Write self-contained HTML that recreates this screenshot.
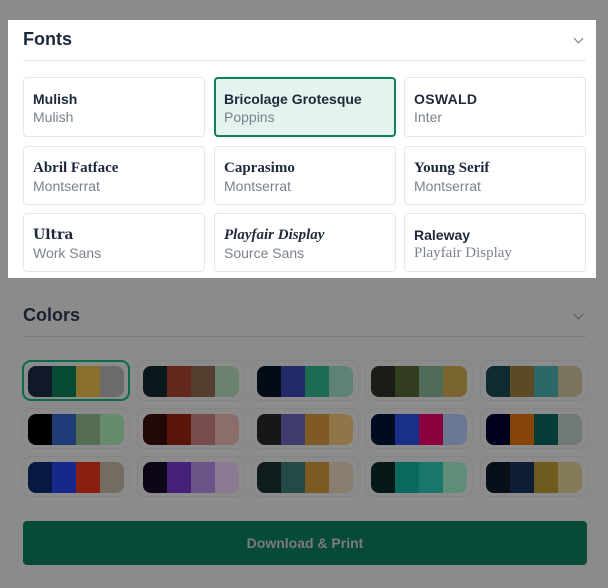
<!DOCTYPE html>
<html><head><meta charset="utf-8"><style>
*{margin:0;padding:0;box-sizing:border-box}
body{width:608px;height:588px;background:#8b8b8b;position:relative;overflow:hidden;font-family:"Liberation Sans",sans-serif}
.a{position:absolute}
.panel{left:8px;top:20px;width:588px;height:258px;background:#fff}
.h{font-weight:bold;font-size:18px;color:#1e293b}
.card{position:absolute;width:182px;background:#fff;border:1px solid #e5e7eb;border-radius:4px;padding:12px 0 0 9px}
.card .t{font-size:14px;font-weight:bold;color:#1e293b;line-height:18px}
.card .s{font-size:14px;color:#7b8190;line-height:19px}
.sel{background:#e5f3ee;border:2px solid #10805d;padding:11px 0 0 8px}
.sw{position:absolute;width:108px;height:41px;border:1px solid #848484;border-radius:9px;padding:5px}
.bar{display:flex;height:31px;border-radius:8px;overflow:hidden}
.bar i{flex:1}
.chev{width:7px;height:7px;border-right:1.3px solid #666;border-bottom:1.3px solid #666;transform:rotate(45deg)}
</style></head><body>
<div class="a panel"></div>
<div class="a h" style="left:23px;top:29px">Fonts</div>
<div class="a chev" style="left:575px;top:35px;border-color:#777"></div>
<div class="a" style="left:23px;top:60px;width:563px;height:1px;background:#e5e7eb"></div>

<div class="card" style="left:23px;top:77px;height:60px"><div class="t">Mulish</div><div class="s">Mulish</div></div>
<div class="card sel" style="left:214px;top:77px;height:60px"><div class="t">Bricolage Grotesque</div><div class="s">Poppins</div></div>
<div class="card" style="left:404px;top:77px;height:60px"><div class="t" style="font-family:'Liberation Sans Narrow','Liberation Sans',sans-serif;letter-spacing:0.3px">OSWALD</div><div class="s">Inter</div></div>

<div class="card" style="left:23px;top:146px;height:59px"><div class="t" style="font-family:'Liberation Serif',serif;font-size:15px">Abril Fatface</div><div class="s">Montserrat</div></div>
<div class="card" style="left:214px;top:146px;height:59px"><div class="t" style="font-family:'Liberation Serif',serif;font-size:15px">Caprasimo</div><div class="s">Montserrat</div></div>
<div class="card" style="left:404px;top:146px;height:59px"><div class="t" style="font-family:'Liberation Serif',serif;font-size:15px">Young Serif</div><div class="s">Montserrat</div></div>

<div class="card" style="left:23px;top:213px;height:59px"><div class="t" style="font-family:'DejaVu Serif',serif;font-size:14px">Ultra</div><div class="s">Work Sans</div></div>
<div class="card" style="left:214px;top:213px;height:59px"><div class="t" style="font-family:'Liberation Serif',serif;font-style:italic;font-size:15px">Playfair Display</div><div class="s">Source Sans</div></div>
<div class="card" style="left:404px;top:213px;height:59px"><div class="t">Raleway</div><div class="s" style="font-family:'Liberation Serif',serif;font-size:15px">Playfair Display</div></div>

<div class="a h" style="left:23px;top:305px;color:#1a2030">Colors</div>
<div class="a chev" style="left:575px;top:311px;border-color:#555"></div>
<div class="a" style="left:23px;top:336px;width:563px;height:1px;background:#7c7c7c"></div>

<div class="sw" style="left:22px;top:360px;border:2px solid #0a6a4c;padding:4px"><div class="bar"><i style="background:#111827"></i><i style="background:#064a35"></i><i style="background:#8a6f2e"></i><i style="background:#6b6b6e"></i></div></div>
<div class="sw" style="left:137px;top:360px"><div class="bar"><i style="background:#0b171a"></i><i style="background:#63271b"></i><i style="background:#553e30"></i><i style="background:#6b8270"></i></div></div>
<div class="sw" style="left:251px;top:360px"><div class="bar"><i style="background:#030b14"></i><i style="background:#232a6a"></i><i style="background:#1d6a55"></i><i style="background:#5f8274"></i></div></div>
<div class="sw" style="left:365px;top:360px"><div class="bar"><i style="background:#1c1b18"></i><i style="background:#323d1f"></i><i style="background:#4d6b58"></i><i style="background:#7a6530"></i></div></div>
<div class="sw" style="left:480px;top:360px"><div class="bar"><i style="background:#0e2c30"></i><i style="background:#5b4a25"></i><i style="background:#2d6868"></i><i style="background:#7a735e"></i></div></div>

<div class="sw" style="left:22px;top:408px"><div class="bar"><i style="background:#000"></i><i style="background:#1f3c78"></i><i style="background:#556d52"></i><i style="background:#668a6c"></i></div></div>
<div class="sw" style="left:137px;top:408px"><div class="bar"><i style="background:#220807"></i><i style="background:#5a150a"></i><i style="background:#774c4c"></i><i style="background:#8b6d6a"></i></div></div>
<div class="sw" style="left:251px;top:408px"><div class="bar"><i style="background:#161719"></i><i style="background:#413c6e"></i><i style="background:#7f5a27"></i><i style="background:#8f7648"></i></div></div>
<div class="sw" style="left:365px;top:408px"><div class="bar"><i style="background:#000a20"></i><i style="background:#1a2f88"></i><i style="background:#8b003e"></i><i style="background:#6b7893"></i></div></div>
<div class="sw" style="left:480px;top:408px"><div class="bar"><i style="background:#00001f"></i><i style="background:#884308"></i><i style="background:#053c36"></i><i style="background:#717a74"></i></div></div>

<div class="sw" style="left:22px;top:456px"><div class="bar"><i style="background:#071843"></i><i style="background:#17288c"></i><i style="background:#8a1e10"></i><i style="background:#736c62"></i></div></div>
<div class="sw" style="left:137px;top:456px"><div class="bar"><i style="background:#0d0618"></i><i style="background:#462179"></i><i style="background:#6a5488"></i><i style="background:#8a7b92"></i></div></div>
<div class="sw" style="left:251px;top:456px"><div class="bar"><i style="background:#0e1d1c"></i><i style="background:#234a45"></i><i style="background:#7b5a23"></i><i style="background:#897d6e"></i></div></div>
<div class="sw" style="left:365px;top:456px"><div class="bar"><i style="background:#041917"></i><i style="background:#0b6a5e"></i><i style="background:#18766a"></i><i style="background:#5f8d78"></i></div></div>
<div class="sw" style="left:480px;top:456px"><div class="bar"><i style="background:#080f18"></i><i style="background:#0e1e36"></i><i style="background:#705b1f"></i><i style="background:#857a5a"></i></div></div>

<div class="a" style="left:23px;top:521px;width:564px;height:44px;background:#074a37;border-radius:4px;color:#7b7b7b;font-weight:bold;font-size:14px;text-align:center;line-height:44px">Download &amp; Print</div>
</body></html>
